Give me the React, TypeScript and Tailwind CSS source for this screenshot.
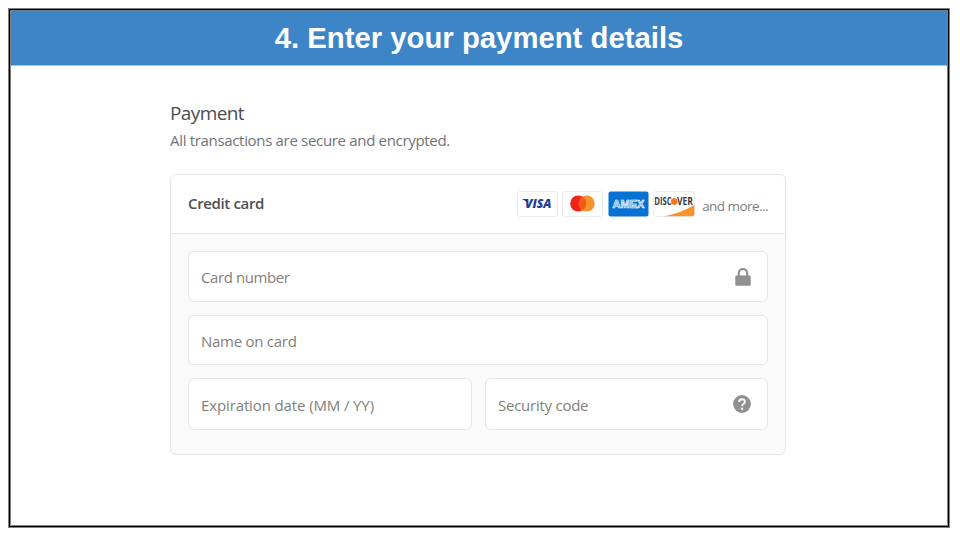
import React from "react";

const fieldBase =
  "flex items-center justify-between rounded-md border border-[#e6e6e6] bg-white pl-3 text-[15px] text-[#827f7c]";

function Visa() {
  return (
    <svg className="h-[26px] w-[41px]" viewBox="0 0 41 26">
      <rect x="0.5" y="0.5" width="40" height="25" rx="2.5" fill="#fff" stroke="#ececec" />
      <text x="8" y="17" textLength="26.5" lengthAdjust="spacingAndGlyphs" fontFamily="Open Sans, sans-serif" fontSize="12" fontWeight="800" fontStyle="italic" fill="#233c97">
        VISA
      </text>
      <path d="M5.5 8h4l2 5.5C10 11 8 9.3 5.5 8.5Z" fill="#233c97" />
    </svg>
  );
}

function Mastercard() {
  return (
    <svg className="h-[26px] w-[41px]" viewBox="0 0 41 26">
      <rect x="0.5" y="0.5" width="40" height="25" rx="2.5" fill="#fff" stroke="#ececec" />
      <circle cx="16.2" cy="12.5" r="8" fill="#f2231b" />
      <circle cx="24.7" cy="12.5" r="8" fill="#f7922d" />
      <path d="M20.45 5.7a8 8 0 0 1 0 13.6a8 8 0 0 1 0-13.6Z" fill="#f65a17" />
    </svg>
  );
}

function Amex() {
  return (
    <svg className="h-[26px] w-[41px]" viewBox="0 0 41 26">
      <rect x="0.5" y="0.5" width="40" height="25" rx="2" fill="#0670d3" />
      <text x="4.5" y="16.5" textLength="32" lengthAdjust="spacingAndGlyphs" fontFamily="Liberation Sans, sans-serif" fontSize="10.5" fontWeight="700" fill="#5ba3e4" stroke="#fff" strokeWidth="0.6">
        AMEX
      </text>
    </svg>
  );
}

function Discover() {
  return (
    <svg className="h-[26px] w-[42px]" viewBox="0 0 42 26">
      <rect x="0.5" y="0.5" width="41" height="25" rx="2.5" fill="#fff" stroke="#ececec" />
      <path d="M11.5 25.3C23 23 33 19 41.3 14V23.3a2 2 0 0 1-2 2Z" fill="#f7922d" />
      <g fontFamily="Open Sans, sans-serif" fontSize="10" fontWeight="700" fill="#3b3b3b">
        <text x="1.2" y="14" textLength="17.5" lengthAdjust="spacingAndGlyphs">DISC</text>
        <text x="24" y="14" textLength="16" lengthAdjust="spacingAndGlyphs">VER</text>
      </g>
      <circle cx="21.3" cy="10.6" r="3.3" fill="#f6761d" />
    </svg>
  );
}

function LockIcon() {
  return (
    <svg className="h-[18px] w-4" viewBox="0 0 16 18">
      <path d="M3.8 8V5.2a4.2 4.2 0 0 1 8.4 0V8" fill="none" stroke="#918f8f" strokeWidth="2.2" />
      <rect x="0.3" y="7.5" width="15.4" height="10.2" rx="1" fill="#918f8f" />
    </svg>
  );
}

function HelpIcon() {
  return (
    <svg className="size-[18px]" viewBox="0 0 18 18">
      <circle cx="9" cy="9" r="8.9" fill="#918f8f" />
      <path d="M6.2 6.9C6.2 3.3 11.9 3.4 11.9 6.7C11.9 8.9 9.1 8.7 9.1 11.2" fill="none" stroke="#fff" strokeWidth="2" />
      <circle cx="9.1" cy="13.7" r="1.2" fill="#fff" />
    </svg>
  );
}

export default function App() {
  return (
    <div className="h-[540px] w-[960px] bg-white p-2 pr-[10px] pb-3 font-['Open_Sans',sans-serif]">
      <div className="h-full border border-[#808080]">
        <div className="h-full border border-black">
          <main className="h-full border border-[#808080] border-t-[#66809a]">
            <header className="flex h-[55px] items-center justify-center border-b border-[#a3c6e8] bg-[#3d85c6] font-['Liberation_Sans',sans-serif] text-[29.3px] font-bold text-white">
              <h1>4. Enter your payment details</h1>
            </header>

            <section className="ml-[159px] w-[616px] pt-[33px]">
              <h2 className="h-7 text-[19px] leading-7 tracking-[-0.6px] text-[#4a4d50]">Payment</h2>
              <p className="h-7 text-[15px] leading-[26px] tracking-[-0.32px] text-[#707376]">
                All transactions are secure and encrypted.
              </p>

              <div className="mt-[19px] h-[281px] rounded-md border border-[#e6e6e6] bg-[#fafafa]">
                <div className="flex h-[59px] items-center rounded-t-md border-b border-[#e6e6e6] bg-white px-[17px]">
                  <span className="pb-[2px] text-[15px] font-semibold tracking-[-0.36px] text-[#4c4f52]">Credit card</span>
                  <div className="mr-[7px] mb-px ml-auto flex gap-[4.5px]">
                    <Visa />
                    <Mastercard />
                    <Amex />
                    <Discover />
                  </div>
                  <span className="mt-[5px] text-[13.5px] tracking-[-0.55px] text-[#7c7f82]">and more...</span>
                </div>

                {/* Card fields */}
                <div className="grid grid-cols-[284px_283px] grid-rows-[51px_50px_52px] gap-x-[13px] gap-y-[13px] px-[17px] pt-[17px]">
                  <div className={`${fieldBase} col-span-2 pr-4`}>
                    <span className="pt-[2px] tracking-[-0.4px]">Card number</span>
                    <LockIcon />
                  </div>
                  <div className={`${fieldBase} col-span-2`}>
                    <span className="pt-[3px] tracking-[-0.27px]">Name on card</span>
                  </div>
                  <div className={fieldBase}>
                    <span className="pt-[2px] tracking-[-0.12px]">Expiration date (MM / YY)</span>
                  </div>
                  <div className={`${fieldBase} pr-4`}>
                    <span className="pt-[2px] tracking-[-0.25px]">Security code</span>
                    <HelpIcon />
                  </div>
                </div>
              </div>
            </section>
          </main>
        </div>
      </div>
    </div>
  );
}
